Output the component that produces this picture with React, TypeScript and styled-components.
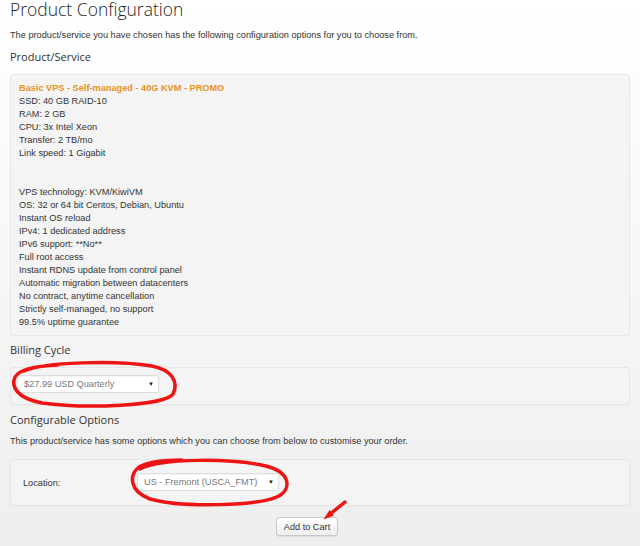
import React from "react";
import styled, { createGlobalStyle } from "styled-components";

const GlobalStyle = createGlobalStyle`
  html, body {
    margin: 0;
    padding: 0;
  }
  body {
    background: linear-gradient(#ffffff 0%, #eeeeee 100%);
    min-height: 546px;
    font-family: "Liberation Sans", Arial, sans-serif;
    color: #333;
  }
`;

const Page = styled.div`
  position: relative;
  height: 546px;
  overflow: hidden;
  padding: 0 10px;
  box-sizing: border-box;
`;

const Title = styled.h1`
  margin: 0;
  font-family: "Open Sans", sans-serif;
  font-weight: 300;
  font-size: 17.5px;
  line-height: 18px;
  color: #222;
`;

const Note = styled.p<{ $top: number; $bottom: number }>`
  margin: ${(p) => p.$top}px 0 ${(p) => p.$bottom}px;
  font-size: 9.2px;
  line-height: 13px;
  color: #333;
`;

const SectionTitle = styled.h2<{ $before?: number; $after?: number }>`
  margin: ${(p) => p.$before ?? 6}px 0 ${(p) => p.$after ?? 9}px;
  font-family: "Open Sans", sans-serif;
  font-weight: 400;
  font-size: 11px;
  line-height: 16px;
  color: #333;
`;

const Panel = styled.div<{ $pad: string }>`
  background: #f4f4f4;
  border: 1px solid #e6e6e6;
  border-radius: 3px;
  padding: ${(p) => p.$pad};
  box-shadow: 0 1px 1px rgba(0, 0, 0, 0.02);
`;

const ProductName = styled.div`
  font-weight: bold;
  color: #e8921e;
  font-size: 9.2px;
  line-height: 13px;
`;

const Line = styled.div`
  font-size: 9.2px;
  line-height: 13px;
  min-height: 13px;
  color: #333;
`;

const FieldRow = styled.div`
  display: flex;
  align-items: center;
`;

const FieldLabel = styled.div`
  width: 114px;
  font-size: 9.2px;
  line-height: 13px;
  padding-top: 3px;
  color: #333;
`;

const Select = styled.div`
  display: flex;
  align-items: center;
  justify-content: space-between;
  width: 142px;
  height: 18px;
  box-sizing: border-box;
  padding: 0 4px 0 6px;
  background: #fff;
  border: 1px solid #dcdcdc;
  border-radius: 2px;
  box-shadow: inset 0 1px 1px rgba(0, 0, 0, 0.04);
  font-size: 9.2px;
  color: #777;
`;

const Caret = styled.span`
  font-size: 6px;
  color: #222;
`;

const ButtonRow = styled.div`
  display: flex;
  padding-left: 266px;
  margin-top: 11px;
`;

const CartButton = styled.button`
  width: 62px;
  height: 19px;
  padding: 0;
  border: 1px solid #c8c8c8;
  border-radius: 3px;
  background: linear-gradient(#ffffff, #eeeeee);
  box-shadow: 0 1px 1px rgba(0, 0, 0, 0.08);
  font-family: "Liberation Sans", Arial, sans-serif;
  font-size: 9.2px;
  color: #333;
`;

const Marks = styled.svg`
  position: absolute;
  left: 0;
  top: 0;
  pointer-events: none;
`;

const features: string[] = [
  "SSD: 40 GB RAID-10",
  "RAM: 2 GB",
  "CPU: 3x Intel Xeon",
  "Transfer: 2 TB/mo",
  "Link speed: 1 Gigabit",
  "",
  "",
  "VPS technology: KVM/KiwiVM",
  "OS: 32 or 64 bit Centos, Debian, Ubuntu",
  "Instant OS reload",
  "IPv4: 1 dedicated address",
  "IPv6 support: **No**",
  "Full root access",
  "Instant RDNS update from control panel",
  "Automatic migration between datacenters",
  "No contract, anytime cancellation",
  "Strictly self-managed, no support",
  "99.5% uptime guarantee",
];

function Annotations() {
  return (
    <Marks width={640} height={546} viewBox="0 0 640 546">
      <g fill="none" stroke="#ee1414" strokeWidth={3.5} strokeLinecap="round" strokeLinejoin="round">
        <path d="M 24 371 C 45 362, 115 360, 152 366 C 172 370, 179 382, 173 394 C 165 406, 85 409, 42 403 C 16 398, 11 386, 15 377 C 19 370, 35 366, 58 365" />
        <path d="M 140 469 C 162 458, 230 458, 266 466 C 290 472, 292 488, 279 496 C 260 506, 182 508, 150 499 C 129 491, 129 475, 139 467 C 150 461, 166 460, 182 460" />
        <path d="M 345 502 L 329 515" />
      </g>
      <polygon points="323.5,519.5 334,515.5 329.5,510" fill="#ee1414" />
    </Marks>
  );
}

export default function App() {
  return (
    <>
      <GlobalStyle />
      <Page>
        <Title>Product Configuration</Title>
        <Note $top={11} $bottom={0}>
          The product/service you have chosen has the following configuration options for you to choose from.
        </Note>

        <SectionTitle $before={7}>Product/Service</SectionTitle>
        <Panel $pad="7px 8px 6px">
          <ProductName>Basic VPS - Self-managed - 40G KVM - PROMO</ProductName>
          {features.map((f, i) => (
            <Line key={`feature-${i}`}>{f}</Line>
          ))}
        </Panel>

        <SectionTitle>Billing Cycle</SectionTitle>
        <Panel $pad="7px 6px 11px">
          <Select>
            <span>$27.99 USD Quarterly</span>
            <Caret>▼</Caret>
          </Select>
        </Panel>

        <SectionTitle $before={7} $after={0}>Configurable Options</SectionTitle>
        <Note $top={7} $bottom={11}>
          This product/service has some options which you can choose from below to customise your order.
        </Note>
        <Panel $pad="13px 12px 14px">
          <FieldRow>
            <FieldLabel>Location:</FieldLabel>
            <Select>
              <span>US - Fremont (USCA_FMT)</span>
              <Caret>▼</Caret>
            </Select>
          </FieldRow>
        </Panel>

        <ButtonRow>
          <CartButton>Add to Cart</CartButton>
        </ButtonRow>

        <Annotations />
      </Page>
    </>
  );
}
